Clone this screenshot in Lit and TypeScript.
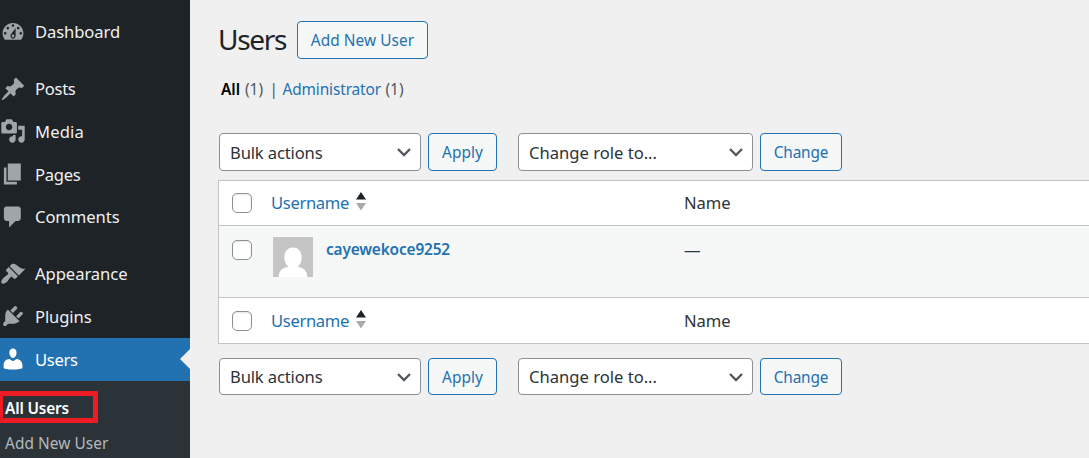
import { LitElement, html, css, svg } from "lit";
import { customElement, property } from "lit/decorators.js";

/** Inline label whose tracking is adjusted so that it fills a given width. */
@customElement("fit-text")
class FitText extends LitElement {
  @property({ type: Number }) w = 0;
  @property() text = "";

  static styles = css`
    :host { display: inline-block; white-space: nowrap; }
    .label { display: inline-block; white-space: pre; }
  `;

  firstUpdated() {
    const label = this.renderRoot.querySelector(".label") as HTMLElement;
    const natural = label.getBoundingClientRect().width;
    label.style.letterSpacing = `${(this.w - natural) / this.text.length}px`;
  }

  render() {
    return html`<span class="label">${this.text}</span>`;
  }
}

const ICONS: Record<string, string> = {
  dashboard:
    "M3.76 16h12.48c1.1-1.37 1.76-3.11 1.76-5 0-4.42-3.58-8-8-8s-8 3.58-8 8c0 1.89.66 3.63 1.76 5zM10 4c.55 0 1 .45 1 1s-.45 1-1 1-1-.45-1-1 .45-1 1-1zM6 6c.55 0 1 .45 1 1s-.45 1-1 1-1-.45-1-1 .45-1 1-1zM14 6c.55 0 1 .45 1 1s-.45 1-1 1-1-.45-1-1 .45-1 1-1zM8.63 11.55L12 7v6c0 1.1-.9 2-2 2s-2-.9-2-2c0-.57.24-1.08.63-1.45zM4 10c.55 0 1 .45 1 1s-.45 1-1 1-1-.45-1-1 .45-1 1-1zM16 10c.55 0 1 .45 1 1s-.45 1-1 1-1-.45-1-1 .45-1 1-1zM11 13c0-.55-.45-1-1-1s-1 .45-1 1 .45 1 1 1 1-.45 1-1z",
  posts:
    "M10.44 3.02l1.82-1.82 6.36 6.35-1.83 1.82c-1.05-.68-2.48-.57-3.41.36l-.75.75c-.92.93-1.04 2.35-.35 3.41l-1.83 1.82-2.41-2.41-2.8 2.79c-.42.42-3.38 2.71-3.8 2.29s1.86-3.39 2.28-3.81l2.79-2.79L4.1 9.36l1.83-1.82c1.05.69 2.48.57 3.4-.36l.75-.75c.93-.92 1.05-2.35.36-3.41z",
  media:
    "M13 11V4c0-.55-.45-1-1-1h-1.67L9 1H5L3.67 3H2c-.55 0-1 .45-1 1v7c0 .55.45 1 1 1h10c.55 0 1-.45 1-1zM7 4.5c1.38 0 2.5 1.12 2.5 2.5S8.38 9.5 7 9.5 4.5 8.38 4.5 7 5.62 4.5 7 4.5zM14 6h5v10.5c0 1.38-1.12 2.5-2.5 2.5S14 17.88 14 16.5s1.12-2.5 2.5-2.5c.17 0 .34.02.5.05V9h-3V6zM10 14.05V13h2v3.5c0 1.38-1.12 2.5-2.5 2.5S7 17.88 7 16.5 8.12 14 9.5 14c.17 0 .34.02.5.05z",
  pages: "M6 15V2h10v13H6zM5 16h8v2H3V5h2v11z",
  comments:
    "M5 2h9c1.1 0 2 .9 2 2v7c0 1.1-.9 2-2 2h-2l-5 5v-5H5c-1.1 0-2-.9-2-2V4c0-1.1.9-2 2-2z",
  appearance:
    "M14.48 11.06L7.41 3.99l1.5-1.5c.5-.56 2.3-.47 3.51.32 1.21.8 1.43 1.28 2.91 2.1 1.18.64 2.45 1.26 4.45.85zM13.77 11.77L6.7 4.7 4.93 6.47c-.39.39-.39 1.02 0 1.41l1.06 1.06c.39.39.39 1.03 0 1.42-.6.6-1.43 1.11-2.21 1.69-.35.26-.7.53-1.01.84C1.43 14.23.4 16.08 1.4 17.07c.99 1 2.84-.03 4.18-1.36.31-.31.58-.66.85-1.02.57-.78 1.08-1.61 1.69-2.21.39-.39 1.02-.39 1.41 0l1.06 1.06c.39.39 1.02.39 1.41 0z",
  plugins:
    "M13.11 4.36L9.87 7.6 8 5.73l3.24-3.24c.35-.34 1.05-.2 1.56.32.52.51.66 1.21.31 1.55zM5.11 6.13l.91-1.12 9.01 9.01-1.19.84c-.71.71-2.63 1.16-3.82 1.16H6.14L4.9 17.26c-.59.59-1.54.59-2.12 0-.59-.58-.59-1.53 0-2.12l1.24-1.24v-3.88c0-1.13.4-3.19 1.09-3.89zM12.37 10.1l3.24-3.24c.34-.35 1.04-.21 1.55.31.52.51.66 1.21.31 1.55l-3.24 3.25z",
  users:
    "M10 9.25c-2.27 0-2.73-3.44-2.73-3.44C7 4.02 7.82 2 9.97 2c2.16 0 2.98 2.02 2.71 3.81 0 0-.41 3.44-2.68 3.44zM10 11.82L12.72 10c2.39 0 4.52 2.33 4.52 4.53v2.49s-3.65 1.13-7.24 1.13c-3.65 0-7.24-1.13-7.24-1.13v-2.49c0-2.25 1.94-4.48 4.47-4.48z",
};

const MENU = [
  [{ icon: "dashboard", label: "Dashboard", w: 85 }],
  [
    { icon: "posts", label: "Posts", w: 40.5 },
    { icon: "media", label: "Media", w: 49 },
    { icon: "pages", label: "Pages", w: 45.5 },
    { icon: "comments", label: "Comments", w: 84.5 },
  ],
  [
    { icon: "appearance", label: "Appearance", w: 92.5 },
    { icon: "plugins", label: "Plugins", w: 56.5 },
    { icon: "users", label: "Users", w: 42.5 },
  ],
];

@customElement("app-root")
class AppRoot extends LitElement {
  static styles = css`
    :host {
      display: flex;
      width: 1089px;
      height: 458px;
      overflow: hidden;
      background: #f0f0f1;
      color: #2c3338;
      font-family: "Noto Sans", "Open Sans", sans-serif;
      font-size: 16.6px;
      line-height: 24px;
    }
    * { box-sizing: border-box; }
    .side { display: flex; flex-direction: column; width: 190px; flex: none; background: #1d2327; color: #f0f0f1; padding-top: 10.5px; }
    .group { margin-bottom: 14px; }
    .group:last-of-type { margin-bottom: 0; }
    .item { display: flex; align-items: center; height: 42.75px; }
    .item fit-text { padding-top: 1px; }
    .item svg { width: 26px; height: 26px; flex: none; margin: 0 9.2px 0 -.2px; fill: #a0a5aa; }
    .current { position: relative; background: #2271b1; color: #fff; }
    .current svg { fill: #fff; }
    .current::after { content: ""; position: absolute; right: 0; top: 11px; border: 10px solid transparent; border-left: 0; border-right-color: #f0f0f1; }
    .sub { position: relative; flex: 1; background: #2c3338; padding: 11px 0 0 5px; font-size: 15.4px; color: #b4b9be; }
    .sub-item { display: flex; align-items: center; height: 35px; }
    .sub-item.on { color: #fff; font-weight: 600; }
    .mark { position: absolute; left: 0; top: 10px; width: 98px; height: 32px; border: 5px solid #ed1c24; border-left-width: 3px; }
    .main { flex: 1; min-width: 0; padding: 21px 0 0 28px; }
    .head { display: flex; align-items: center; height: 38px; }
    .title { font-size: 28px; line-height: 36px; height: 38px; color: #1d2327; width: 79px; }
    .btn { display: flex; align-items: center; justify-content: center; height: 100%; padding-top: 2px; border: 1px solid #2271b1; border-radius: 4px; background: #f6f7f7; color: #2271b1; font-size: 15.4px; }
    .add { width: 131px; }
    .apply { width: 69px; margin: 0 21px 0 7px; }
    .change { width: 82px; margin-left: 7px; }
    .links { display: flex; align-items: center; height: 24px; margin: 19px 0 31px 3px; font-size: 15.4px; color: #50575e; }
    .all { font-weight: 600; color: #000; margin-right: 5px; }
    .bar { margin: 0 8px 0 6.5px; width: 5px; text-align: center; }
    .link { color: #2271b1; margin-right: 4.5px; }
    .tools { display: flex; height: 38px; padding-left: 1px; }
    .tools.low { height: 37px; }
    .select { display: flex; align-items: center; justify-content: space-between; border: 1px solid #8c8f94; border-radius: 4px; background: #fff; padding: 0 9px 0 10px; }
    .select fit-text { padding-top: 1px; }
    .bulk { width: 202px; }
    .role { width: 235px; }
    .chev { width: 14px; height: 10px; fill: none; stroke: #50575e; stroke-width: 2.3; }
    .table { border: 1px solid #c3c4c7; border-right: 0; background: #fff; margin: 9px 0 14px; }
    .row { display: grid; grid-template-columns: 52px 413px 1fr; height: 45px; align-items: center; }
    .row.top { height: 44px; }
    .row.data { height: 73px; align-items: start; background: #f6f7f7; border: solid #c3c4c7; border-width: 1px 0; }
    .check { width: 20px; height: 20px; margin-left: 13px; border: 1px solid #8c8f94; border-radius: 5px; background: #fff; box-shadow: inset 0 1px 2px rgba(0, 0, 0, .1); }
    .data .check { margin-top: 14px; }
    .col { display: flex; align-items: center; color: #2271b1; }
    .sort { width: 10px; height: 20px; margin: -4px 0 0 7px; }
    .user { display: flex; padding: 11px 0 0 2px; color: #2271b1; font-weight: 600; font-size: 15.4px; }
    .user fit-text { padding-top: 1px; }
    .avatar { width: 40px; height: 40px; margin-right: 13px; }
    .dash { margin-top: 12px; }
  `;

  private text(text: string, w: number) {
    return html`<fit-text .text=${text} .w=${w}></fit-text>`;
  }

  private chevron() {
    return html`<svg class="chev" viewBox="0 0 14 10">${svg`<path d="M1 2l6 6 6-6"/>`}</svg>`;
  }

  private tools(low = false) {
    return html`<div class="tools ${low ? "low" : ""}">
      <div class="select bulk">${this.text("Bulk actions", 92.5)}${this.chevron()}</div>
      <div class="btn apply">${this.text("Apply", 41)}</div>
      <div class="select role">${this.text("Change role to...", 128)}${this.chevron()}</div>
      <div class="btn change">${this.text("Change", 54.5)}</div>
    </div>`;
  }

  private columns(top = false) {
    return html`<div class="row ${top ? "top" : ""}">
      <div class="check"></div>
      <div class="col">
        ${this.text("Username", 78)}
        <svg class="sort" viewBox="0 0 10 20"><path fill="#1d2327" d="M0 8.5L5 1l5 7.500z" /><path fill="#a7aaad" d="M0 12h10l-5 7.500z" /></svg>
      </div>
      <div>${this.text("Name", 46.5)}</div>
    </div>`;
  }

  render() {
    return html`
      <nav class="side">
        ${MENU.map(
          (group) => html`<div class="group">
            ${group.map(
              (m) => html`<div class="item ${m.icon === "users" ? "current" : ""}">
                <svg viewBox="0 0 20 20"><path fill-rule="evenodd" d=${ICONS[m.icon]} /></svg>${this.text(m.label, m.w)}
              </div>`,
            )}
          </div>`,
        )}
        <section class="sub">
          <div class="sub-item on">${this.text("All Users", 64)}</div>
          <div class="sub-item">${this.text("Add New User", 103.5)}</div>
          <div class="mark"></div>
        </section>
      </nav>
      <main class="main">
        <div class="head">
          <div class="title">${this.text("Users", 68)}</div>
          <div class="btn add">${this.text("Add New User", 103.5)}</div>
        </div>
        <div class="links">
          <span class="all">${this.text("All", 19)}</span>${this.text("(1)", 18)}
          <span class="bar">|</span>
          <span class="link">${this.text("Administrator", 98.5)}</span>${this.text("(1)", 18)}
        </div>
        ${this.tools()}
        <div class="table">
          ${this.columns(true)}
          <div class="row data">
            <div class="check"></div>
            <div class="user">
              <svg class="avatar" viewBox="0 0 40 40">
                <rect width="40" height="40" fill="#c5c5c5" />
                <path fill="#fff" d="M20 10.500c5 0 8.700 4.200 8.700 10 0 4-1.700 7.500-4.200 9.300 6 .7 9.800 4.200 9.800 10.200H5.700c0-6 3.800-9.500 9.800-10.200-2.500-1.800-4.200-5.300-4.200-9.300 0-5.800 3.700-10 8.700-10z" />
              </svg>
              ${this.text("cayewekoce9252", 124)}
            </div>
            <div class="dash">${this.text("—", 16)}</div>
          </div>
          ${this.columns()}
        </div>
        ${this.tools(true)}
      </main>
    `;
  }
}
